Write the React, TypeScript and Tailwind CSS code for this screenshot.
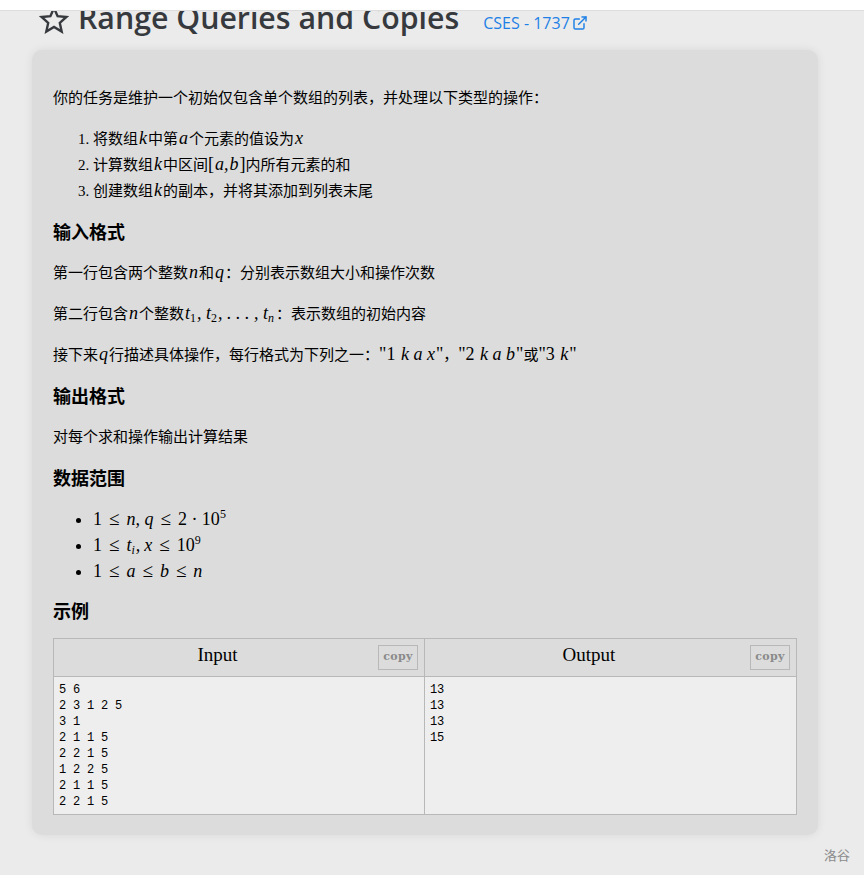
import { ExternalLink } from "lucide-react";
import type { ReactNode } from "react";

const CJK = "font-['Liberation_Serif','Noto_Sans_CJK_SC',serif]";

function M({ children }: { children: ReactNode }) {
  return <span className="font-['Liberation_Serif',serif] italic text-[18px] leading-none mx-[1px]">{children}</span>;
}

function N({ children }: { children: ReactNode }) {
  return <span className="font-['Liberation_Serif',serif] text-[18px] leading-none">{children}</span>;
}

function Sub({ children, upright }: { children: ReactNode; upright?: boolean }) {
  return <span className={`relative top-[3px] text-[12px] leading-none mr-[1px] ${upright ? "not-italic" : "italic"}`}>{children}</span>;
}

function Sup({ children }: { children: ReactNode }) {
  return <span className="relative -top-[7px] text-[12px] leading-none">{children}</span>;
}

function Le() {
  return <span className="mx-[7px] text-[19px] leading-none">≤</span>;
}

function Heading({ children, className }: { children: ReactNode; className: string }) {
  return <h3 className={`text-[18px] leading-[24px] font-bold text-black font-['Noto_Sans_CJK_SC',sans-serif] ${className}`}>{children}</h3>;
}

function IoCol({ title, lines, className }: { title: string; lines: string[]; className: string }) {
  return (
    <div className={`flex flex-col ${className}`}>
      <div className="h-[38px] shrink-0 border-b border-[#b8b8b8] flex items-start pl-[3px] pr-[6px] pt-[5px]">
        <span className="flex-1 text-center font-['Liberation_Serif',serif] text-[19px] leading-[22px] text-black">{title}</span>
        <span className="mt-[1px] w-[40px] h-[25px] border border-[#b8b8b8] flex items-center justify-center font-['DejaVu_Serif',serif] font-bold text-[11px] tracking-[0.4px] text-[#8a8a8a]">
          copy
        </span>
      </div>
      <pre className="flex-1 bg-[#eeeeee] pl-[5px] pt-[5px] font-['Liberation_Mono','Noto_Sans_CJK_SC',monospace] text-[12px] tracking-[-0.2px] leading-[16px] text-black">
        {lines.join("\n")}
      </pre>
    </div>
  );
}

export default function App() {
  return (
    <div className={`w-[864px] h-[875px] overflow-hidden bg-[#ebebeb] flex flex-col ${CJK}`}>
      <div className="h-[11px] shrink-0 bg-white border-b border-[#dddddd]" />

      <div className="h-[39px] shrink-0 overflow-hidden text-[#36393d]">
        <div className="-mt-[15px] pl-[39px] flex items-baseline font-['Open_Sans',sans-serif]">
          <svg viewBox="0 0 30 29" className="w-[30px] h-[29px] self-end mb-[6px] shrink-0" fill="none" stroke="currentColor" strokeWidth="2.4" strokeLinejoin="miter">
            <polygon points="15,3 18.6,11.2 27.4,12 20.8,17.9 22.7,26.6 15,22 7.3,26.6 9.2,17.9 2.6,12 11.4,11.2" />
          </svg>
          <h1 className="ml-[9px] text-[30.3px] leading-[44px] font-semibold whitespace-nowrap">
            Range Queries and Copies
          </h1>
          <a className="ml-[24px] flex items-baseline gap-[2px] text-[16px] leading-[22px] text-[#1e80e6]">
            CSES - 1737 <ExternalLink className="w-[16px] h-[16px] self-center" strokeWidth={2.2} />
          </a>
        </div>
      </div>

      <div className="ml-[32px] w-[786px] h-[785px] shrink-0 rounded-[10px] bg-[#dcdcdc] shadow-[0_0_10px_rgba(0,0,0,0.08)] px-[21px] pt-[37px] text-[15px] text-black">
        <p className="leading-[22px]">你的任务是维护一个初始仅包含单个数组的列表，并处理以下类型的操作：</p>

        <ol className="mt-[17px] pl-[40px] list-decimal leading-[26px]">
          <li>将数组<M>k</M>中第<M>a</M>个元素的值设为<M>x</M></li>
          <li>计算数组<M>k</M>中区间<N>[</N><M>a,<span className="ml-[1px]">b</span></M><N>]</N>内所有元素的和</li>
          <li>创建数组<M>k</M>的副本，并将其添加到列表末尾</li>
        </ol>

        <Heading className="mt-[15px]">输入格式</Heading>
        <p className="mt-[18px] leading-[24px]">第一行包含两个整数<M>n</M>和<M>q</M>：分别表示数组大小和操作次数</p>
        <p className="mt-[17px] leading-[24px]">
          第二行包含<M>n</M>个整数<M>t<Sub upright>1</Sub>, t<Sub upright>2</Sub>, . . . , t<Sub>n</Sub></M>：表示数组的初始内容
        </p>
        <p className="mt-[17px] leading-[24px]">
          接下来<M>q</M>行描述具体操作，每行格式为下列之一：<N>"1 </N><M>k a x</M><N>"</N>，<N>"2 </N><M>k a b</M><N>"</N>或<N>"3 </N><M>k</M><N>"</N>
        </p>

        <Heading className="mt-[16px]">输出格式</Heading>
        <p className="mt-[18px] leading-[24px]">对每个求和操作输出计算结果</p>

        <Heading className="mt-[16px]">数据范围</Heading>
        <ul className="mt-[17px] pl-[40px] list-disc leading-[26px] text-[18px] font-['Liberation_Serif',serif]">
          <li>1<Le /><i>n, q</i><Le />2 · 10<Sup>5</Sup></li>
          <li>1<Le /><i>t<Sub>i</Sub>,<span className="ml-[4px]">x</span></i><Le />10<Sup>9</Sup></li>
          <li>1<Le /><i>a</i><Le /><i>b</i><Le /><i>n</i></li>
        </ul>

        <Heading className="mt-[14px]">示例</Heading>

        <div className="mt-[16px] w-[744px] h-[177px] border border-[#b8b8b8] flex">
          <IoCol
            title="Input"
            className="w-[371px] shrink-0 border-r border-[#b8b8b8]"
            lines={["5 6", "2 3 1 2 5", "3 1", "2 1 1 5", "2 2 1 5", "1 2 2 5", "2 1 1 5", "2 2 1 5"]}
          />
          <IoCol title="Output" className="flex-1" lines={["13", "13", "13", "15"]} />
        </div>
      </div>

      <div className="mt-[11px] pr-[14px] text-right text-[13px] leading-[18px] text-[#8a8a8a] font-['Noto_Sans_CJK_SC',sans-serif]">洛谷</div>
    </div>
  );
}
